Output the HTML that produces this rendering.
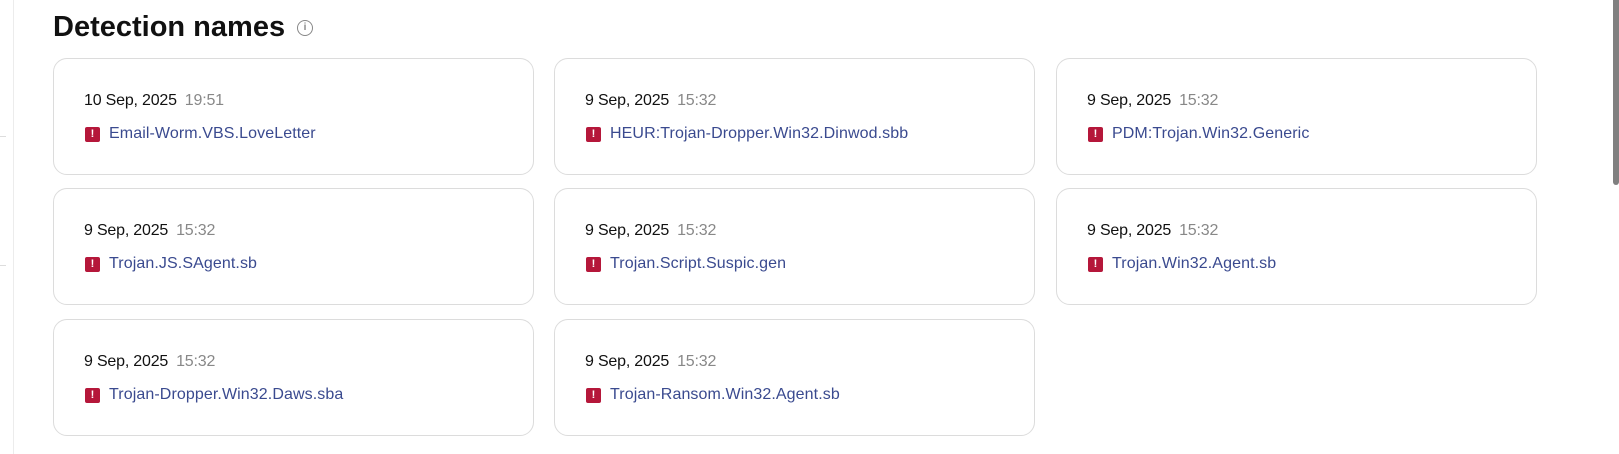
<!DOCTYPE html>
<html><head><style>
body{margin:0;width:1619px;height:454px;background:#fff;font-family:"Liberation Sans",sans-serif;position:relative;overflow:hidden}
.lb{position:absolute;left:13px;top:0;width:1px;height:454px;background:#ececec}
.tick{position:absolute;left:0;width:6px;height:1px;background:#ddd}
.sb{position:absolute;left:1613px;top:0;width:6px;height:185px;background:#808080;border-radius:0 0 3px 3px}
h1{position:absolute;left:53px;top:11px;margin:0;font-size:29px;font-weight:bold;color:#111;letter-spacing:0px}
.info{position:absolute;left:297px;top:20px;width:16px;height:16px;border:1.5px solid #888;border-radius:50%;box-sizing:border-box;color:#888;font-size:10px;text-align:center;line-height:13px;font-weight:bold}
.c{position:absolute;width:481px;height:117px;border:1px solid #dcdcdc;border-radius:14px;box-sizing:border-box}
.d{position:absolute;left:30px;top:33px;font-size:16px;color:#111;letter-spacing:-0.2px}
.d span{color:#888;margin-left:8px}
.n{position:absolute;left:31px;top:66px;font-size:16px;color:#3a4a8f;letter-spacing:0.1px}
.n i{display:inline-block;width:15px;height:15px;background:#b5173a;border-radius:2px;color:#fff;font-style:normal;font-size:11px;font-weight:bold;text-align:center;line-height:15px;vertical-align:1px;margin-right:9px;letter-spacing:0}
</style></head><body>
<div class="lb"></div><div class="tick" style="top:136px"></div><div class="tick" style="top:265px"></div>
<div class="sb"></div>
<h1>Detection names</h1><div class="info">i</div>
<div class="c" style="left:53px;top:58px"><div class="d">10 Sep, 2025<span>19:51</span></div><div class="n"><i>!</i>Email-Worm.VBS.LoveLetter</div></div>
<div class="c" style="left:554px;top:58px"><div class="d">9 Sep, 2025<span>15:32</span></div><div class="n"><i>!</i>HEUR:Trojan-Dropper.Win32.Dinwod.sbb</div></div>
<div class="c" style="left:1056px;top:58px"><div class="d">9 Sep, 2025<span>15:32</span></div><div class="n"><i>!</i>PDM:Trojan.Win32.Generic</div></div>
<div class="c" style="left:53px;top:188px"><div class="d">9 Sep, 2025<span>15:32</span></div><div class="n"><i>!</i>Trojan.JS.SAgent.sb</div></div>
<div class="c" style="left:554px;top:188px"><div class="d">9 Sep, 2025<span>15:32</span></div><div class="n"><i>!</i>Trojan.Script.Suspic.gen</div></div>
<div class="c" style="left:1056px;top:188px"><div class="d">9 Sep, 2025<span>15:32</span></div><div class="n"><i>!</i>Trojan.Win32.Agent.sb</div></div>
<div class="c" style="left:53px;top:319px"><div class="d">9 Sep, 2025<span>15:32</span></div><div class="n"><i>!</i>Trojan-Dropper.Win32.Daws.sba</div></div>
<div class="c" style="left:554px;top:319px"><div class="d">9 Sep, 2025<span>15:32</span></div><div class="n"><i>!</i>Trojan-Ransom.Win32.Agent.sb</div></div>
</body></html>
